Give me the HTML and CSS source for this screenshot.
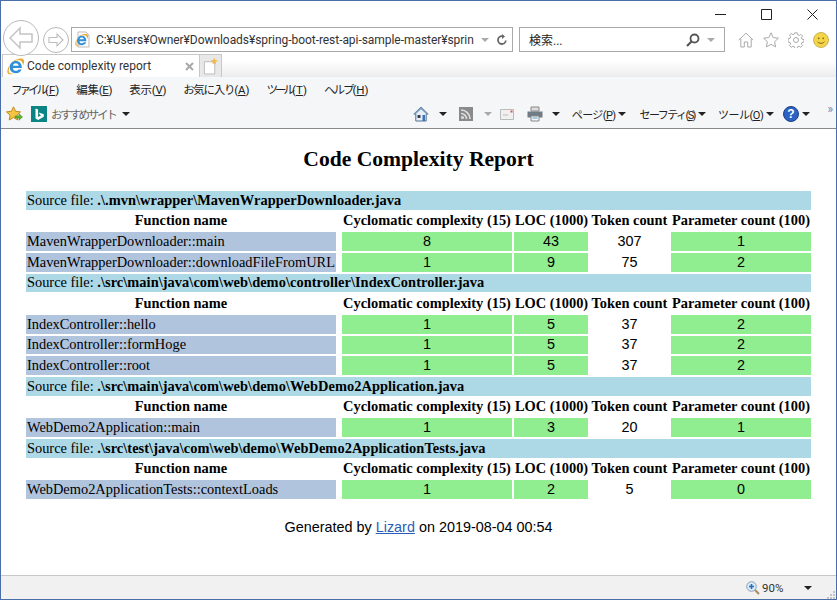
FILE: index.html
```html
<!DOCTYPE html>
<html lang="ja">
<head>
<meta charset="utf-8">
<title>Code complexity report</title>
<link rel="stylesheet" href="styles.css">
</head>
<body>
<svg class="defs" width="0" height="0" aria-hidden="true">
  <defs>
    <symbol id="ie" viewBox="0 0 16 16">
      <path d="M2.500 8.800C2.500 5.200 5 2.800 8.300 2.800S14 5.300 14 9.400H5.500c.2 1.800 1.400 2.700 3 2.700 1.100 0 1.900-.4 2.400-1.200h2.900c-.9 2.200-2.900 3.500-5.400 3.500-3.400 0-5.900-2.300-5.900-5.600Zm3.100-1.600h5.300c-.2-1.400-1.200-2.200-2.600-2.200s-2.400.8-2.700 2.200Z" fill="#2f8fd8"/>
      <path d="M2.700 6.400C.5 9.700-.4 13 .9 14.600c1.200 1.300 3.700.9 6.100-.6-2.300.8-4.200.8-4.900-.2-.8-1.100-.3-4 .6-7.400Z" fill="#e9a92c"/>
      <path d="M4.500 3.500C8.300 1 13 -.3 15 .9c1.500.9 1.300 3.200.1 5.900-.2-2.300-1-3.700-2.100-4.300-1.900-1-5-.2-8.500 1Z" fill="#e9a92c"/>
    </symbol>
    <symbol id="caret" viewBox="0 0 8 4"><path d="M0 0h8L4 4Z"/></symbol>
  </defs>
</svg>
<div class="window">
  <header class="chrome">
    <div class="titlebar">
      <svg class="win-btn" viewBox="0 0 11 11"><path d="M0 5.500h11" stroke="#222" fill="none"/></svg>
      <svg class="win-btn" viewBox="0 0 11 11"><path d="M.5.500h10v10H.5Z" stroke="#222" fill="none"/></svg>
      <svg class="win-btn" viewBox="0 0 11 11"><path d="M.5.500l10 10M10.500.500l-10 10" stroke="#222" fill="none"/></svg>
    </div>
    <div class="navbar">
      <svg class="nav-back" viewBox="0 0 36 36"><circle cx="18" cy="18" r="17.500" fill="#fff" stroke="#b8b8b8"/><path d="M7 18l10-10v6h12v8H17v6Z" fill="none" stroke="#c4c4c4" stroke-width="1.500"/></svg>
      <svg class="nav-forward" viewBox="0 0 26 26"><circle cx="13" cy="13" r="12.500" fill="#fff" stroke="#b8b8b8"/><path d="M20 13l-6-6v3.500H6v5h8V19Z" fill="none" stroke="#bdbdbd" stroke-width="1.100"/></svg>
      <div class="address">
        <svg class="addr-icon" viewBox="0 0 16 16"><path d="M3 .500h8l3 3v12H3Z" fill="#fff" stroke="#bbb"/><use href="#ie" x="0" y="2" width="13" height="13"/></svg>
        <span class="addr-text">C:¥Users¥Owner¥Downloads¥spring-boot-rest-api-sample-master¥sprin</span>
        <svg class="caret caret-light" viewBox="0 0 8 4"><use href="#caret"/></svg>
        <svg class="refresh" viewBox="0 0 12 12"><path d="M9.800 6.500A3.900 3.900 0 1 1 6 2.200" fill="none" stroke="#666" stroke-width="1.800"/><path d="M6 0v5l3-2.500Z" fill="#666"/></svg>
      </div>
      <div class="search">
        <span class="search-text">検索...</span>
        <svg class="lens" viewBox="0 0 14 14"><circle cx="8.500" cy="5.500" r="4" fill="none" stroke="#555" stroke-width="1.800"/><path d="M5.500 8.500L1 13" stroke="#555" stroke-width="2.200"/></svg>
        <svg class="caret caret-light" viewBox="0 0 8 4"><use href="#caret"/></svg>
      </div>
      <div class="cmd-icons">
        <svg viewBox="0 0 16 16"><path d="M.8 8L8 1.200 15.200 8M2.800 6.800V15h3.500v-5h3.400v5h3.500V6.800" fill="none" stroke="#aaa"/></svg>
        <svg viewBox="0 0 16 16"><path d="M8 .8l2.200 4.800 5.200.6-3.800 3.500 1 5.200L8 12.300l-4.600 2.600 1-5.200L.6 6.200l5.200-.6Z" fill="none" stroke="#aaa"/></svg>
        <svg viewBox="0 0 16 16"><circle cx="8" cy="8" r="2.500" fill="none" stroke="#aaa"/><path d="M6.800.8h2.400l.4 2 1.500.6 1.700-1.100 1.700 1.700-1.100 1.700.6 1.500 2 .4v2.400l-2 .4-.6 1.500 1.100 1.700-1.700 1.700-1.700-1.100-1.500.6-.4 2H6.800l-.4-2-1.500-.6-1.700 1.100-1.700-1.700 1.100-1.700-.6-1.500-2-.4V6.800l2-.4.6-1.500-1.100-1.700 1.700-1.700 1.700 1.100 1.500-.6Z" fill="none" stroke="#aaa"/></svg>
        <svg viewBox="0 0 16 16"><circle cx="8" cy="8" r="7.500" fill="#f5d547" stroke="#c9b35a"/><circle cx="5.700" cy="6.300" r=".9" fill="#7a6a20"/><circle cx="10.300" cy="6.300" r=".9" fill="#7a6a20"/><path d="M4.500 9.800c1.800 2 5.200 2 7 0" fill="none" stroke="#7a6a20"/></svg>
      </div>
    </div>
    <div class="tabbar">
      <div class="tab">
        <svg class="tab-icon"><use href="#ie"/></svg>
        <span class="tab-title">Code complexity report</span>
        <svg class="tab-close" viewBox="0 0 9 9"><path d="M1 1l7 7M8 1L1 8" stroke="#a8a8a8" stroke-width="2"/></svg>
      </div>
      <div class="tab-new">
        <svg viewBox="0 0 16 18"><path d="M1.500 4.500h11v13h-11Z" fill="#fff" stroke="#bbb"/><path d="M12 0l1 2.500L15.800 3 13.500 5l.5 2.500L12 6l-2 1.500.5-2.500L8.200 3 11 2.500Z" fill="#f5b84a"/></svg>
      </div>
    </div>
    <nav class="menubar">
      <span><span class="kana-file">ファイル</span>(<u>F</u>)</span>
      <span class="kanji">編集(<u>E</u>)</span>
      <span class="kanji">表示(<u>V</u>)</span>
      <span><span class="kana-fav">お気に入り</span>(<u>A</u>)</span>
      <span><span class="kana-file">ツール</span>(<u>T</u>)</span>
      <span><span class="kana-help">ヘルプ</span>(<u>H</u>)</span>
    </nav>
    <div class="favbar">
      <svg class="fav-star" viewBox="0 0 17 16"><path d="M7.500 .8l2.100 4.500 4.900.6-3.600 3.300.9 4.800-4.300-2.400-4.300 2.400.9-4.800L.5 5.900l4.900-.6Z" fill="#f4c542" stroke="#c08a20"/><path d="M9 10h4V7.800l3.500 3.200-3.500 3.200V12H9Z" fill="#5cb531" stroke="#3f8a20" stroke-width=".5"/></svg>
      <svg class="fav-bing" viewBox="0 0 16 16"><path d="M0 0h16v16H0Z" fill="#0b8484"/><path d="M4.500 2.500l2.600.9v7.600l3-1.700-1.400-.7-.9-2.100 5 1.800v2.400L7.100 14l-2.600-1.400Z" fill="#fff"/></svg>
      <span class="fav-label">おすすめサイト</span>
      <svg class="caret caret-dark fav-caret" viewBox="0 0 8 4"><use href="#caret"/></svg>
      <div class="tools">
        <svg class="tool-icon" viewBox="0 0 16 16"><path d="M8 1L.8 8h2v7h10.400V8h2Z" fill="#e8eef5" stroke="#54708f"/><path d="M8 1L.8 8h2L8 3.200 13.200 8h2Z" fill="#7d9fc2"/><path d="M4.500 9h3v3h-3Z" fill="#345"/><path d="M9.500 9h2.500v6H9.500Z" fill="#3a74b5"/></svg>
        <svg class="caret caret-dark tool-caret" viewBox="0 0 8 4"><use href="#caret"/></svg>
        <svg class="tool-icon tool-rss" viewBox="0 0 14 14"><path d="M0 0h14v14H0Z" fill="#8a8a8a"/><circle cx="3.500" cy="10.500" r="1.500" fill="#ddd"/><path d="M2 6.500a5.500 5.500 0 0 1 5.500 5.500M2 3a9 9 0 0 1 9 9" fill="none" stroke="#ddd" stroke-width="1.600"/></svg>
        <svg class="caret caret-light tool-caret-rss" viewBox="0 0 8 4"><use href="#caret"/></svg>
        <svg class="tool-mail" viewBox="0 0 14 11"><path d="M.5.500h13v10H.5Z" fill="#f0f0f0" stroke="#bbb"/><path d="M3 6h5" stroke="#bbb"/><path d="M10.500 1.500h2v2h-2Z" fill="#d9534f"/></svg>
        <svg class="tool-print" viewBox="0 0 16 16"><path d="M4 1h8v4H4Z" fill="#ddd" stroke="#888"/><path d="M.5 5.500h15v6H.5Z" fill="#6f7b85"/><path d="M4 10h8v5H4Z" fill="#f4f4f4" stroke="#888"/><path d="M5.500 12h5" stroke="#4aa3df"/></svg>
        <svg class="caret caret-dark tool-caret-print" viewBox="0 0 8 4"><use href="#caret"/></svg>
        <span class="tool-text tool-page">ページ(<u>P</u>)</span>
        <svg class="caret caret-dark" viewBox="0 0 8 4"><use href="#caret"/></svg>
        <span class="tool-text tool-safety">セーフティ(<u>S</u>)</span>
        <svg class="caret caret-dark" viewBox="0 0 8 4"><use href="#caret"/></svg>
        <span class="tool-text tool-tools">ツール(<u>O</u>)</span>
        <svg class="caret caret-dark" viewBox="0 0 8 4"><use href="#caret"/></svg>
        <svg class="tool-help" viewBox="0 0 16 16"><circle cx="8" cy="8" r="7.500" fill="#2b62c4" stroke="#1c3f86"/><text x="8" y="12" class="help-mark">?</text></svg>
        <svg class="caret caret-dark help-caret" viewBox="0 0 8 4"><use href="#caret"/></svg>
        <span class="overflow-mark">»</span>
      </div>
    </div>
  </header>
  <main class="page">
    <h1 class="report-title">Code Complexity Report</h1>
    <table class="report">
      <colgroup>
        <col class="col-fn"><col class="col-ccn"><col class="col-loc"><col class="col-tok"><col class="col-par">
      </colgroup>
      <tbody>
        <tr><td class="src" colspan="5">Source file: <b>.\.mvn\wrapper\MavenWrapperDownloader.java</b></td></tr>
        <tr class="head"><th class="fn-head">Function name</th><th>Cyclomatic complexity (15)</th><th>LOC (1000)</th><th>Token count</th><th>Parameter count (100)</th></tr>
        <tr><td class="fn">MavenWrapperDownloader::main</td><td class="ok">8</td><td class="ok">43</td><td class="num">307</td><td class="ok">1</td></tr>
        <tr><td class="fn">MavenWrapperDownloader::downloadFileFromURL</td><td class="ok">1</td><td class="ok">9</td><td class="num">75</td><td class="ok">2</td></tr>
        <tr><td class="src" colspan="5">Source file: <b>.\src\main\java\com\web\demo\controller\IndexController.java</b></td></tr>
        <tr class="head"><th class="fn-head">Function name</th><th>Cyclomatic complexity (15)</th><th>LOC (1000)</th><th>Token count</th><th>Parameter count (100)</th></tr>
        <tr><td class="fn">IndexController::hello</td><td class="ok">1</td><td class="ok">5</td><td class="num">37</td><td class="ok">2</td></tr>
        <tr><td class="fn">IndexController::formHoge</td><td class="ok">1</td><td class="ok">5</td><td class="num">37</td><td class="ok">2</td></tr>
        <tr><td class="fn">IndexController::root</td><td class="ok">1</td><td class="ok">5</td><td class="num">37</td><td class="ok">2</td></tr>
        <tr><td class="src" colspan="5">Source file: <b>.\src\main\java\com\web\demo\WebDemo2Application.java</b></td></tr>
        <tr class="head"><th class="fn-head">Function name</th><th>Cyclomatic complexity (15)</th><th>LOC (1000)</th><th>Token count</th><th>Parameter count (100)</th></tr>
        <tr><td class="fn">WebDemo2Application::main</td><td class="ok">1</td><td class="ok">3</td><td class="num">20</td><td class="ok">1</td></tr>
        <tr><td class="src" colspan="5">Source file: <b>.\src\test\java\com\web\demo\WebDemo2ApplicationTests.java</b></td></tr>
        <tr class="head"><th class="fn-head">Function name</th><th>Cyclomatic complexity (15)</th><th>LOC (1000)</th><th>Token count</th><th>Parameter count (100)</th></tr>
        <tr><td class="fn">WebDemo2ApplicationTests::contextLoads</td><td class="ok">1</td><td class="ok">2</td><td class="num">5</td><td class="ok">0</td></tr>
      </tbody>
    </table>
    <p class="generated">Generated by <a class="lizard" href="#">Lizard</a> on 2019-08-04 00:54</p>
  </main>
  <footer class="statusbar">
    <svg class="zoom-icon" viewBox="0 0 14 14"><circle cx="5.500" cy="5.500" r="4.800" fill="#dce9f7" stroke="#8aa0b8"/><path d="M3 5.500h5M5.500 3v5" stroke="#1f6fc4" stroke-width="1.600"/><path d="M9 9l4 4" stroke="#a98a62" stroke-width="2"/></svg>
    <span class="zoom-level">90%</span>
    <svg class="caret caret-dark zoom-caret" viewBox="0 0 8 4"><use href="#caret"/></svg>
    <svg class="grip" viewBox="0 0 8 8"><path d="M6 0h2v2H6ZM3 3h2v2H3ZM6 3h2v2H6ZM0 6h2v2H0ZM3 6h2v2H3ZM6 6h2v2H6Z" fill="#c4c4c4"/></svg>
  </footer>
</div>
</body>
</html>
```
FILE: styles.css
```css
* { box-sizing: border-box; }
html, body { margin: 0; height: 100%; overflow: hidden; }
.defs { position: absolute; }
.window {
  height: 600px;
  border: 1px solid #4a6ea9;
  display: flex;
  flex-direction: column;
  background: #fff;
  font-family: Roboto, "Noto Sans CJK JP", sans-serif;
  color: #222;
}
.chrome { flex: none; border-bottom: 1px solid #8a8a8a; }

.titlebar { height: 24px; display: flex; justify-content: flex-end; align-items: flex-end; gap: 35px; padding: 0 18px 5px 0; }
.win-btn { width: 11px; height: 11px; }

.navbar { height: 29px; display: flex; align-items: center; padding-left: 2px; }
.nav-back { width: 36px; height: 36px; flex: none; margin-bottom: 3px; position: relative; z-index: 1; }
.nav-forward { width: 26px; height: 26px; flex: none; margin-left: 4px; }
.address { width: 442px; height: 25px; margin-left: 2px; border: 1px solid #a9a9a9; display: flex; align-items: center; padding: 0 4px 0 3px; font-size: 12px; }
.addr-icon { width: 16px; height: 17px; flex: none; }
.addr-text { margin-left: 5px; flex: 1; white-space: nowrap; color: #333; letter-spacing: -0.05px; }
.caret { width: 8px; height: 4px; flex: none; }
.caret-light { fill: #aaa; }
.caret-dark { fill: #222; }
.refresh { width: 12px; height: 12px; margin-left: 7px; flex: none; }
.search { width: 206px; height: 25px; margin-left: 6px; border: 1px solid #a9a9a9; display: flex; align-items: center; padding: 0 9px; font-size: 12px; }
.search-text { flex: 1; }
.lens { width: 14px; height: 14px; margin-right: 7px; }
.cmd-icons { display: flex; gap: 9px; margin-left: 13px; }
.cmd-icons svg { width: 16px; height: 16px; }

.tabbar { height: 23px; display: flex; align-items: stretch; background: linear-gradient(#fff 30%, #ececec); padding-left: 1px; }
.tab { width: 198px; background: #fff; border: 1px solid #c8c8c8; border-bottom: 0; display: flex; align-items: center; padding: 0 5px 0 4px; position: relative; }
.tab-icon { width: 17px; height: 17px; flex: none; }
.tab-title { font-size: 12px; margin-left: 3px; flex: 1; white-space: nowrap; color: #333; }
.tab-close { width: 9px; height: 9px; flex: none; }
.tab-new { width: 22px; background: #e8e8e8; border: 1px solid #c8c8c8; border-width: 1px 1px 0 0; display: flex; align-items: center; justify-content: center; }
.tab-new svg { width: 15px; height: 18px; }

.menubar { height: 23px; display: flex; align-items: center; gap: 17px; padding-left: 10px; background: #f5f6f7; font-size: 11.500px; color: #222; }
.menubar span { white-space: nowrap; }
.kanji { letter-spacing: -0.3px; }
.kana-file { letter-spacing: -3px; }
.kana-fav { letter-spacing: -1.3px; }
.kana-help { letter-spacing: -2px; }

.favbar { height: 28px; display: flex; align-items: center; padding-left: 5px; background: #f5f6f7; font-size: 11.500px; }
.fav-star { width: 17px; height: 16px; flex: none; }
.fav-bing { width: 16px; height: 16px; margin-left: 8px; flex: none; }
.fav-label { color: #666; margin-left: 4px; white-space: nowrap; letter-spacing: -2.300px; }
.fav-caret { margin-left: 7px; }
.tools { margin-left: auto; display: flex; align-items: center; padding-right: 3px; }
.tool-icon { width: 16px; height: 16px; flex: none; }
.tool-caret { margin-left: 10px; }
.tool-rss { margin-left: 12px; width: 14px; height: 14px; }
.tool-caret-rss { margin-left: 11px; }
.tool-mail { width: 14px; height: 11px; margin-left: 8px; flex: none; }
.tool-print { width: 16px; height: 16px; margin-left: 13px; flex: none; }
.tool-caret-print { margin-left: 9px; }
.tool-text { font-size: 11px; letter-spacing: -0.6px; white-space: nowrap; color: #222; }
.tool-page { margin-left: 12px; }
.tool-safety { margin-left: 13px; letter-spacing: -1.550px; }
.tool-tools { margin-left: 12px; letter-spacing: -0.45px; }
.tools .tool-text + .caret { margin-left: 3px; }
.tool-help { width: 16px; height: 16px; margin-left: 9px; flex: none; }
.help-mark { font: bold 12px "Liberation Sans", sans-serif; fill: #fff; text-anchor: middle; }
.help-caret { margin-left: 3px; }
.overflow-mark { font-size: 12px; color: #6a86b0; margin-left: 17px; margin-bottom: 10px; line-height: 1; }

.page { flex: 1; min-height: 0; overflow: hidden; }
.report-title { margin: 18px 0 0; font: bold 21.600px/25px "Liberation Serif", serif; text-align: center; color: #000; }
.report {
  margin: 17px auto 0;
  width: 789px;
  table-layout: fixed;
  border-collapse: separate;
  border-spacing: 2px;
  font: 14.400px "Liberation Serif", serif;
  color: #000;
}
.col-fn { width: 314px; }
.col-ccn { width: 170px; }
.col-loc { width: 74px; }
.col-tok { width: 79px; }
.col-par { width: 140px; }
.report td, .report th { height: 18.670px; padding: 0 1px; line-height: 17px; white-space: nowrap; }
.report th { font-weight: bold; text-align: center; }
.src { background: #add8e6; }
.src b { letter-spacing: 0.05px; }
.fn-head { border-right: 4px solid #fff; }
.fn { background: #b0c4de; background-clip: padding-box; border-right: 4px solid #fff; }
.ok, .num { font-family: "Liberation Sans", sans-serif; text-align: center; }
.ok { background: #90ee90; }
.generated { margin: 18px 0 0; text-align: center; font: 14.400px/17px "Liberation Sans", sans-serif; color: #000; }
.lizard { color: #2a5db8; }

.statusbar { flex: none; height: 24px; background: #f1f1f1; border-top: 1px solid #c8c8c8; display: flex; align-items: center; padding-left: 745px; }
.zoom-icon { width: 14px; height: 14px; flex: none; }
.zoom-level { font-size: 11.500px; margin-left: 2px; color: #333; }
.zoom-caret { margin-left: 21px; }
.grip { width: 8px; height: 8px; margin-left: auto; margin-right: 1px; align-self: flex-end; }
```
